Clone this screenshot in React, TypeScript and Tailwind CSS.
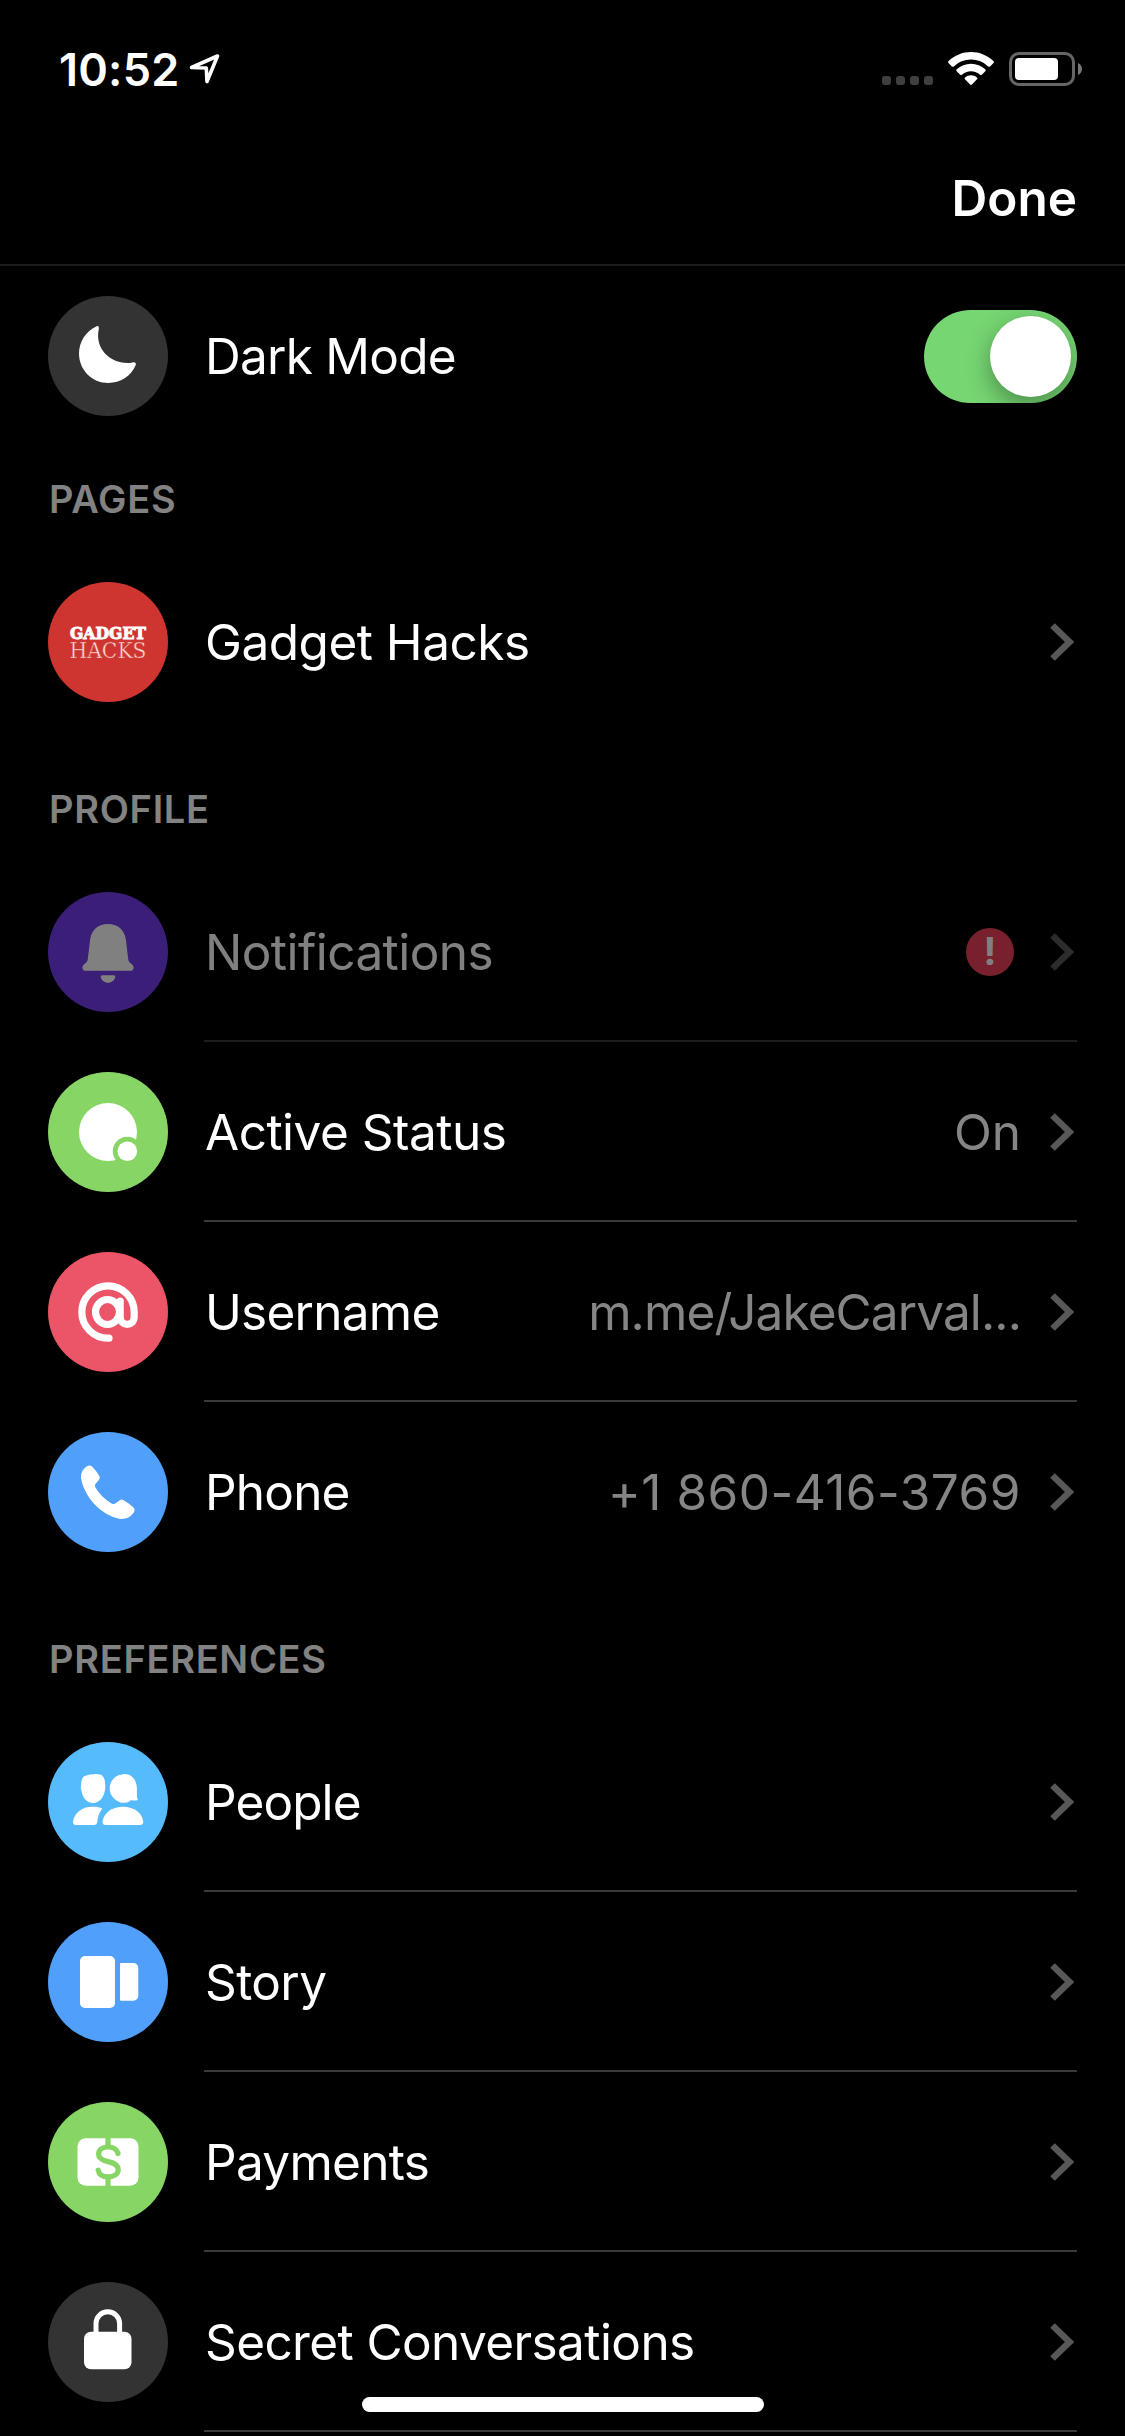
import type { ReactNode } from "react";
import clsx from "clsx";

type SettingsRowProps = {
  label: string;
  labelClass: string;
  iconBg: string;
  icon: ReactNode;
  value?: string;
  valueClass?: string;
  alert?: boolean;
  dimmed?: boolean;
  divider?: boolean;
  trailing?: ReactNode;
};

const IconSvg: React.FC<{ children: ReactNode }> = ({ children }) => (
  <svg viewBox="0 0 120 120" className="size-[120px]" fill="#fff">
    {children}
  </svg>
);

const MoonIcon = () => (
  <IconSvg>
    <path d="M48.3 30.4C38 35 31 45.5 31 57.5 31 74 44 87 60.3 87c12 0 22.7-6.8 27.2-17.4 1.2-2.4-.4-3.8-3-3.1C66 70 46 55 50.8 33c.5-2.4-.7-3.5-2.5-2.6z" />
  </IconSvg>
);

const GadgetHacksLogo = () => (
  <IconSvg>
    <text
      x="22"
      y="56.7"
      fontFamily="DejaVu Serif, serif"
      fontWeight="700"
      fontSize="17"
      stroke="#fff"
      strokeWidth="1"
      textLength="76"
      lengthAdjust="spacingAndGlyphs"
    >
      GADGET
    </text>
    <text
      x="21.5"
      y="76"
      fontFamily="DejaVu Serif, serif"
      fontSize="22"
      fill="#fbe0dc"
      stroke="#cf3530"
      strokeWidth="0.5"
      textLength="77"
      lengthAdjust="spacingAndGlyphs"
    >
      HACKS
    </text>
  </IconSvg>
);

const BellIcon = () => (
  <IconSvg>
    <path d="M60 32c-10.500 0-17 6.500-18 16.500L39.800 67c-.3 2.200-1.200 3.400-3 4.800-1.600 1.200-2.400 2.400-2.400 3.900 0 2 1.400 3.100 3.500 3.100h44.200c2.100 0 3.500-1.100 3.500-3.100 0-1.500-.8-2.700-2.400-3.900-1.800-1.400-2.700-2.600-3-4.800L78 48.500C77 38.500 70.500 32 60 32z" />
    <path d="M54.500 83.200h11c1.300 0 2 .8 1.700 2-.8 3.200-3.700 5.500-7.200 5.500s-6.400-2.300-7.200-5.500c-.3-1.200.4-2 1.700-2z" />
  </IconSvg>
);

const ActiveIcon = () => (
  <IconSvg>
    <circle cx="60" cy="60" r="29" />
    <circle cx="79.300" cy="79.300" r="14.500" fill="#87d565" />
    <circle cx="79.300" cy="79.300" r="9.800" />
  </IconSvg>
);

const AtIcon = () => (
  <IconSvg>
    <g fill="none" stroke="#fff" strokeWidth="7.200" strokeLinecap="round">
      <path d="M61 86.200h-1A26.200 26.200 0 1 1 86.200 60v4.500c0 10.500-14 10.500-14 0V49" />
      <ellipse cx="59.500" cy="60" rx="12" ry="12.500" />
    </g>
  </IconSvg>
);

const PhoneIcon = () => (
  <IconSvg>
    <path d="M38.500 34.500c2-1.400 4-1.500 5.700.2 2.600 2.600 5.200 6 7 9 .9 1.600.7 3-.4 4.300l-3 3.600c-1 1.300-1 2.300-.3 3.800 3.800 6.700 9.300 12.200 16.200 16 1.500.8 2.600.8 3.900-.2l3.800-2.800c1.300-1 2.700-1.100 4.200-.2 3.600 2.100 6.800 4.400 9.600 7 1.700 1.600 1.900 3.600.5 5.500-3.600 4.800-9 7-14.500 6C51 82.500 36 63 33.200 47c-.8-5 1-9.600 5.300-12.500z" />
  </IconSvg>
);

const PeopleIcon = () => (
  <IconSvg>
    <path d="M45.500 32.200c2-.5 4.500-.4 6.500.4 1.700.6 2.800 1.400 3.600 2.900 1.200 2 1.800 5.500 1.700 9-.1 8.500-4.800 16.500-12 16.500-6.800 0-11.200-6-11.800-12.500-.7-1.200-.9-2.700-.5-4.200.3-3.500.3-7.400 2.500-9.500 1.300-1.200 2.300-.9 3.700-1.600 2-.9 4-.7 6.300-1z" />
    <path d="M66 36.200c2-2.200 4.600-3.300 7.200-3.400 3-1.300 7.200-.8 10 1.300 3.600 2.500 5.500 7 5.700 12 .2 4.500-.6 8 .9 12-2.500.8-4.700.6-6.800-.2-1 1.500-3.300 2.700-6 2.900-2.800.2-5-.4-7-1.500-5-2.300-8.300-7.500-8.300-13.300 0-3.900 1.700-7.300 4.300-9.800z" />
    <path d="M44 64.800c3.800 0 7 .3 9.200 1.200 1 .4 1 1 .4 1.800-2.900 3.600-3.700 7.300-4.300 12-.3 2.200-1.200 3.200-3.500 3.200H28c-2.200 0-3.300-1.200-3-3.400 1.200-8.500 9-14.800 19-14.800z" />
    <path d="M75 64.800c11.500 0 19.300 6.500 20.200 14.800.2 2.200-1 3.400-3.200 3.400H57.500c-2.200 0-3.300-1.200-3-3.400C55.700 71.300 63.500 64.800 75 64.800z" />
  </IconSvg>
);

const StoryIcon = () => (
  <IconSvg>
    <rect x="32" y="34" width="35" height="52" rx="5" />
    <path d="M73 41h12.300a5 5 0 0 1 5 5v27.700a5 5 0 0 1-5 5H73a1 1 0 0 1-1-1V42a1 1 0 0 1 1-1z" />
  </IconSvg>
);

const PaymentsIcon = () => (
  <IconSvg>
    <rect x="29.500" y="36.300" width="61" height="47.400" rx="8" />
    <g fill="none" stroke="#87d565" strokeWidth="5.200">
      <path d="M60 36v8M60 76v8" />
      <path
        strokeLinecap="round"
        d="M70 51.500c-1-4-4.800-6.500-9.800-6.500-5.500 0-9.600 2.800-9.600 7.200 0 4.300 3.200 6 9.600 7.400 6.600 1.400 10 3.400 10 7.900 0 4.600-4.300 7.400-10 7.400-5.400 0-9.200-2.500-10-6.700"
      />
    </g>
  </IconSvg>
);

const LockIcon = () => (
  <IconSvg>
    <rect x="36" y="49.700" width="47.500" height="37.600" rx="7" />
    <path
      d="M48 53V41.500a11.800 11.800 0 0 1 23.600 0V53"
      fill="none"
      stroke="#fff"
      strokeWidth="5"
    />
  </IconSvg>
);

const Chevron = () => (
  <svg
    width="26"
    height="40"
    viewBox="0 0 26 40"
    fill="none"
    className="mr-0.5"
  >
    <path d="M3.500 3.500 20.500 20 3.500 36.500" stroke="#58585a" strokeWidth="6.600" />
  </svg>
);

const Toggle = () => (
  <div className="flex h-[93px] w-[153px] items-center justify-end overflow-hidden rounded-full bg-[#76d672] p-1.5">
    <div className="size-[81px] rounded-full bg-white shadow-[0_9px_24px_rgba(0,0,0,0.35)]" />
  </div>
);

const StatusBar = () => (
  <div className="flex h-[132px] items-start justify-between pl-[59px] pr-[42px] pt-[44px]">
    <div className="flex h-[50px] items-center gap-[10px]">
      <span className="text-[45px] font-semibold leading-none tracking-[0.2px]">
        10:52
      </span>
      <svg width="32" height="32" viewBox="0 0 32 32" fill="none">
        <path
          d="M2.500 14.500 28.500 3 18 28.500 17.300 15z"
          stroke="#fff"
          strokeWidth="3.600"
          strokeLinejoin="round"
        />
      </svg>
    </div>
    <div className="flex h-[50px] items-center">
      <div className="mr-[15px] mt-[23px] flex gap-[5px]">
        {[0, 1, 2, 3].map((dot) => (
          <div key={dot} className="size-[9px] rounded-[3px] bg-[#3f3f3f]" />
        ))}
      </div>
      <svg width="46" height="34" viewBox="0 0 46 34" fill="#fff">
        <path d="M23 0c8.600 0 16.500 3.400 22.400 8.900.7.7.7 1.400.1 2l-3.400 3.500c-.6.600-1.200.6-1.900 0A25 25 0 0 0 23 7.600 25 25 0 0 0 5.800 14.400c-.7.6-1.300.6-1.900 0L.5 10.900c-.6-.6-.6-1.300.1-2C6.500 3.400 14.400 0 23 0z" />
        <path d="M23 11.700c5.500 0 10.400 2.100 14.200 5.600.7.700.7 1.300.1 1.900l-3.500 3.500c-.6.600-1.100.6-1.800 0-2.400-2.200-5.500-3.500-9-3.500s-6.600 1.300-9 3.500c-.7.600-1.200.6-1.800 0l-3.500-3.500c-.6-.6-.6-1.200.1-1.900 3.800-3.500 8.700-5.600 14.200-5.600z" />
        <path d="M23 23.300c2.300 0 4.300.8 5.900 2.200.7.600.7 1.200.1 1.800l-5.100 5.200c-.6.600-1.200.6-1.800 0L17 27.300c-.6-.6-.6-1.200.1-1.800 1.600-1.400 3.600-2.200 5.900-2.200z" />
      </svg>
      <svg width="74" height="34" viewBox="0 0 74 34" className="ml-[15px]">
        <rect
          x="1.500"
          y="1.500"
          width="63"
          height="31"
          rx="8.500"
          fill="none"
          stroke="#666"
          strokeWidth="3"
        />
        <rect x="6" y="6" width="43" height="22" rx="4" fill="#fff" />
        <path d="M69 11c2.600 1.200 4 3.400 4 6s-1.400 4.800-4 6z" fill="#777" />
      </svg>
    </div>
  </div>
);

const SectionTitle: React.FC<{ className: string; children: string }> = ({
  className,
  children,
}) => (
  <h2
    className={clsx(
      "flex items-center pl-[49px] text-[38px] font-semibold leading-none tracking-[0.7px] text-[#828282]",
      className,
    )}
  >
    {children}
  </h2>
);

const SettingsRow: React.FC<SettingsRowProps> = ({
  label,
  labelClass,
  iconBg,
  icon,
  value,
  valueClass,
  alert,
  dimmed,
  divider,
  trailing,
}) => (
  <div className={clsx("flex h-[180px] pl-12 pr-12", dimmed && "opacity-50")}>
    <div
      className={clsx("mt-[30px] size-[120px] shrink-0 rounded-full", iconBg)}
    >
      {icon}
    </div>
    <div
      className={clsx(
        "ml-9 flex flex-1 items-center justify-between whitespace-nowrap border-b-2 pt-0.5 text-[49.500px] leading-none",
        divider ? "border-[#3a3a3a]" : "border-transparent",
      )}
    >
      <span className={clsx("pl-px pt-0.5", labelClass)}>{label}</span>
      {trailing ?? (
        <div className="flex items-center">
          {value && (
            <span className={clsx("mr-7 pt-0.5 text-[#858585]", valueClass)}>
              {value}
            </span>
          )}
          {alert && (
            <span className="mr-[35px] flex size-12 items-center justify-center rounded-full bg-[#f0405a] pb-0.5 text-[38px] font-bold">
              !
            </span>
          )}
          <Chevron />
        </div>
      )}
    </div>
  </div>
);

export default function App() {
  return (
    <div className="relative flex h-[2436px] w-[1125px] flex-col overflow-hidden bg-black font-['Inter',sans-serif] text-white">
      <StatusBar />
      <div className="flex h-[134px] items-center justify-end border-b-2 border-[#1c1c1c] pr-12 pt-0.5">
        <span className="text-[49.500px] font-semibold leading-none">Done</span>
      </div>
      <SettingsRow
        label="Dark Mode"
        labelClass="tracking-[-0.75px]"
        iconBg="bg-[#333333]"
        icon={<MoonIcon />}
        trailing={<Toggle />}
      />

      <SectionTitle className="h-[106px]">PAGES</SectionTitle>
      <SettingsRow
        label="Gadget Hacks"
        labelClass="tracking-[-0.5px]"
        iconBg="bg-[#cf3530]"
        icon={<GadgetHacksLogo />}
      />

      <SectionTitle className="h-[130px] pt-6">PROFILE</SectionTitle>
      <SettingsRow
        label="Notifications"
        labelClass="tracking-[-0.55px]"
        iconBg="bg-[#743cf0]"
        icon={<BellIcon />}
        alert
        dimmed
        divider
      />
      <SettingsRow
        label="Active Status"
        labelClass="tracking-[-0.5px]"
        iconBg="bg-[#87d565]"
        icon={<ActiveIcon />}
        value="On"
        divider
      />
      <SettingsRow
        label="Username"
        labelClass="tracking-[-0.75px]"
        iconBg="bg-[#ec5568]"
        icon={<AtIcon />}
        value="m.me/JakeCarval..."
        valueClass="tracking-[-0.9px]"
        divider
      />
      <SettingsRow
        label="Phone"
        labelClass="tracking-[-0.8px]"
        iconBg="bg-[#4f9ffb]"
        icon={<PhoneIcon />}
        value="+1 860-416-3769"
        valueClass="tracking-[0.5px]"
      />

      <SectionTitle className="h-[130px] pt-6">PREFERENCES</SectionTitle>
      <SettingsRow
        label="People"
        labelClass="tracking-[-0.9px]"
        iconBg="bg-[#56bbfb]"
        icon={<PeopleIcon />}
        divider
      />
      <SettingsRow
        label="Story"
        labelClass="tracking-[-0.6px]"
        iconBg="bg-[#4f9ffb]"
        icon={<StoryIcon />}
        divider
      />
      <SettingsRow
        label="Payments"
        labelClass="tracking-[-0.7px]"
        iconBg="bg-[#87d565]"
        icon={<PaymentsIcon />}
        divider
      />
      <SettingsRow
        label="Secret Conversations"
        labelClass="tracking-[-0.6px]"
        iconBg="bg-[#333333]"
        icon={<LockIcon />}
        divider
      />

      <div className="absolute bottom-6 left-[362px] h-[15px] w-[402px] rounded-full bg-white" />
    </div>
  );
}
